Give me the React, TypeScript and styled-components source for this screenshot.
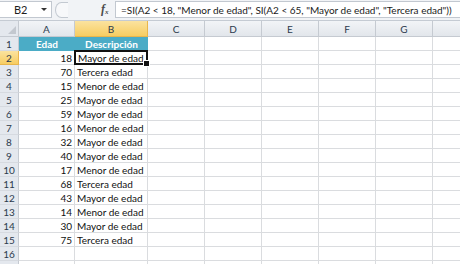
import React from 'react';
import styled, { createGlobalStyle } from 'styled-components';

const GlobalStyle = createGlobalStyle`
  html, body {
    margin: 0;
    padding: 0;
    background: #ffffff;
  }
  body {
    font-family: 'Lato', 'Liberation Sans', sans-serif;
    width: 460px;
    height: 264px;
    overflow: hidden;
  }
`;

const rows: [number, string][] = [
    [18, 'Mayor de edad'],
    [70, 'Tercera edad'],
    [15, 'Menor de edad'],
    [25, 'Mayor de edad'],
    [59, 'Mayor de edad'],
    [16, 'Menor de edad'],
    [32, 'Mayor de edad'],
    [40, 'Mayor de edad'],
    [17, 'Menor de edad'],
    [68, 'Tercera edad'],
    [43, 'Mayor de edad'],
    [14, 'Menor de edad'],
    [30, 'Mayor de edad'],
    [75, 'Tercera edad'],
];

// last column is only partly on screen, its letter falls off the edge
const columns = ['A', 'B', 'C', 'D', 'E', 'F', 'G', ''];
const extraCols = ['C', 'D', 'E', 'F', 'G', 'H'];

export default function App() {
    return (
        <>
            <GlobalStyle />
            <Window>
                <FormulaBar>
                    <NameBox>
                        <span className="ref">B2</span>
                        <span className="arrow" />
                    </NameBox>
                    <Splitter>
                        <span className="knob" />
                    </Splitter>
                    <FxLabel>f<sub>x</sub></FxLabel>
                    <FormulaInput>
                        =SI(A2 &lt; 18, "Menor de edad", SI(A2 &lt; 65, "Mayor de edad", "Tercera edad"))
                    </FormulaInput>
                </FormulaBar>
                <Sheet>
                    <Corner>
                        <span className="tri" />
                    </Corner>
                    {columns.map((c, i) => (
                        <ColHead key={i} $active={c === 'B'}>{c}</ColHead>
                    ))}

                    <RowHead>1</RowHead>
                    <TitleCell>Edad</TitleCell>
                    <TitleCell>Descripción</TitleCell>
                    {extraCols.map((c) => <Cell key={c} />)}

                    {rows.map(([age, desc], i) => (
                        <React.Fragment key={i}>
                            <RowHead $active={i === 0}>{i + 2}</RowHead>
                            <Cell $align="right">{age}</Cell>
                            {i === 0 ? (
                                <SelectedCell>
                                    {desc}
                                    <span className="handle" />
                                </SelectedCell>
                            ) : (
                                <Cell>{desc}</Cell>
                            )}
                            {extraCols.map((c) => <Cell key={c} />)}
                        </React.Fragment>
                    ))}

                    <RowHead>16</RowHead>
                    {columns.map((_, i) => <Cell key={i} />)}
                    <RowHead />
                    {columns.map((_, i) => <Cell key={i} />)}
                </Sheet>
            </Window>
        </>
    );
}

const Window = styled.div`
    width: 460px;
    height: 264px;
    overflow: hidden;
    background: #ffffff;
    display: flex;
    flex-direction: column;
`;

const FormulaBar = styled.div`
    height: 21px;
    flex: none;
    display: flex;
    align-items: center;
    background: #f1f3f6;
    border-bottom: 1px solid #c5cbd3;
    box-sizing: border-box;
    padding: 1px 0 2px 0;
`;

const NameBox = styled.div`
    width: 52px;
    height: 17px;
    box-sizing: border-box;
    background: #ffffff;
    border: 1px solid #c2c8d0;
    border-left: none;
    display: flex;
    align-items: center;
    justify-content: space-between;
    padding: 0 4px 0 14px;
    font-size: 11px;
    color: #1e1e1e;

    .arrow {
        width: 0;
        height: 0;
        border-left: 3px solid transparent;
        border-right: 3px solid transparent;
        border-top: 3px solid #333;
    }
`;

const Splitter = styled.div`
    width: 46px;
    height: 17px;
    display: flex;
    align-items: center;
    padding-left: 3px;

    .knob {
        width: 12px;
        height: 14px;
        border-radius: 50% 0 0 50%;
        border: 1px solid #c3c9d1;
        border-right: none;
        background: #f7f8fa;
    }
`;

const FxLabel = styled.div`
    width: 14px;
    font-family: 'Liberation Serif', serif;
    font-style: italic;
    font-weight: bold;
    font-size: 12px;
    color: #4a4a4a;
    display: flex;
    align-items: baseline;

    sub {
        font-size: 7px;
        vertical-align: baseline;
        position: relative;
        top: 1px;
    }
`;

const FormulaInput = styled.div`
    flex: 1;
    height: 17px;
    box-sizing: border-box;
    background: #ffffff;
    border: 1px solid #c2c8d0;
    border-right: none;
    display: flex;
    align-items: center;
    padding-left: 5px;
    font-size: 10px;
    color: #1a1a1a;
    white-space: nowrap;
    overflow: hidden;
`;

const Sheet = styled.div`
    display: grid;
    grid-template-columns: 19px 56px 73px 57px 57px 57px 57px 57px 57px;
    grid-template-rows: 16px repeat(17, 14px);
    font-size: 11px;
`;

const headBase = `
    box-sizing: border-box;
    display: flex;
    align-items: center;
    justify-content: center;
    font-size: 10px;
    color: #2b3a4d;
    border-right: 1px solid #c5cad1;
    border-bottom: 1px solid #c5cad1;
`;

const Corner = styled.div`
    ${headBase}
    background: #e4e8ee;
    position: relative;

    .tri {
        position: absolute;
        right: 2px;
        bottom: 2px;
        width: 0;
        height: 0;
        border-left: 8px solid transparent;
        border-bottom: 8px solid #c3c8cf;
    }
`;

const ColHead = styled.div<{ $active?: boolean }>`
    ${headBase}
    background: ${(p) =>
        p.$active
            ? 'linear-gradient(#fbe39f, #f7cd62)'
            : 'linear-gradient(#f2f4f7, #e2e6eb)'};
    border-right-color: ${(p) => (p.$active ? '#e9b64c' : '#c5cad1')};
    border-bottom-color: ${(p) => (p.$active ? '#e9b64c' : '#c5cad1')};
`;

const RowHead = styled.div<{ $active?: boolean }>`
    ${headBase}
    background: ${(p) =>
        p.$active ? 'linear-gradient(#fbe39f, #f7cd62)' : '#e4e8ee'};
    border-right-color: ${(p) => (p.$active ? '#e9b64c' : '#c5cad1')};
    border-bottom-color: ${(p) => (p.$active ? '#e9b64c' : '#d6dae0')};
`;

const Cell = styled.div<{ $align?: 'left' | 'right' }>`
    box-sizing: border-box;
    border-right: 1px solid #dadcdf;
    border-bottom: 1px solid #dadcdf;
    display: flex;
    align-items: center;
    justify-content: ${(p) => (p.$align === 'right' ? 'flex-end' : 'flex-start')};
    padding: 0 2px;
    font-size: 10px;
    color: #111;
    white-space: nowrap;
    overflow: hidden;
`;

const TitleCell = styled.div`
    box-sizing: border-box;
    background: #4bacc6;
    border-bottom: 1px solid #4bacc6;
    display: flex;
    align-items: center;
    justify-content: center;
    color: #ffffff;
    font-weight: bold;
    font-size: 10px;
`;

const SelectedCell = styled.div`
    box-sizing: border-box;
    position: relative;
    margin: -1px 0 0 -1px;
    border: 2px solid #111;
    display: flex;
    align-items: center;
    padding: 0 1px 0 2px;
    font-size: 10px;
    color: #111;
    white-space: nowrap;

    .handle {
        position: absolute;
        right: -4px;
        bottom: -4px;
        width: 5px;
        height: 5px;
        background: #111;
        border: 1px solid #fff;
    }
`;
